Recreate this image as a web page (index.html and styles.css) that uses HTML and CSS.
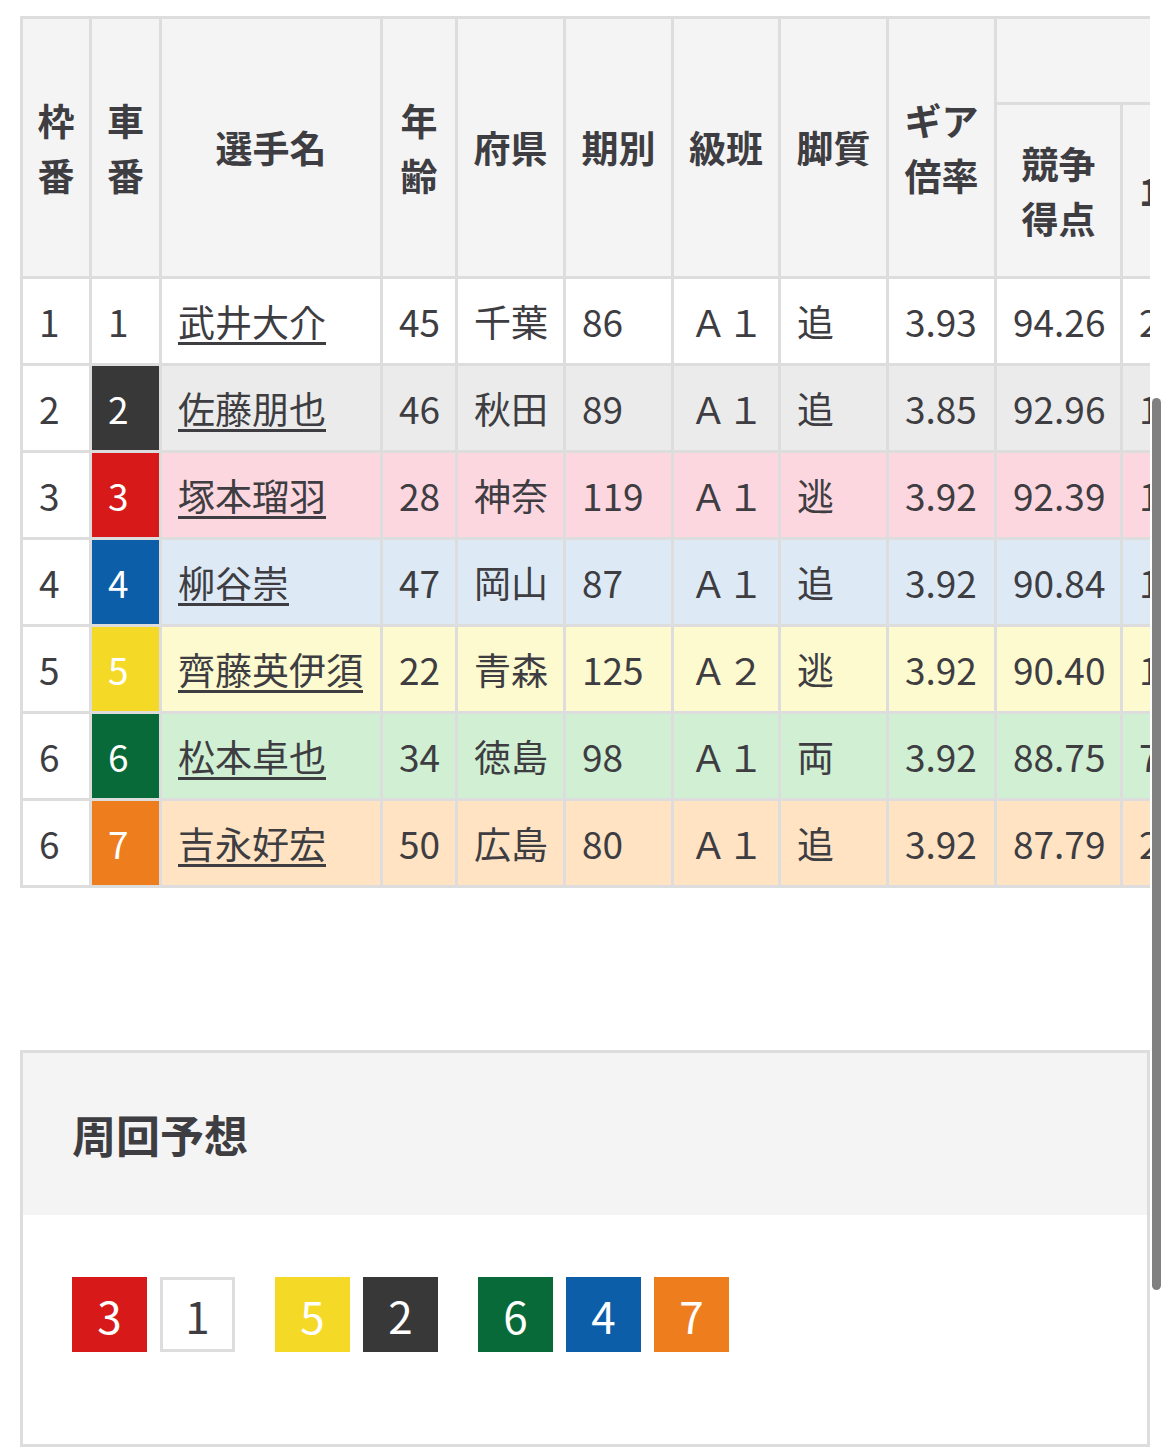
FILE: index.html
```html
<!DOCTYPE html>
<html lang="ja">
<head>
<meta charset="utf-8">
<title>出走表</title>
<link rel="stylesheet" href="styles.css">
</head>
<body>
<div class="table-wrap">
  <table class="entry">
    <colgroup>
      <col class="w-waku"><col class="w-car"><col class="w-name"><col class="w-age"><col class="w-std"><col class="w-std"><col class="w-class"><col class="w-std"><col class="w-std"><col class="w-score"><col class="w-n">
    </colgroup>
    <thead>
      <tr class="hr1">
        <th rowspan="2">枠<br>番</th>
        <th rowspan="2">車<br>番</th>
        <th rowspan="2">選手名</th>
        <th rowspan="2">年<br>齢</th>
        <th rowspan="2">府県</th>
        <th rowspan="2">期別</th>
        <th rowspan="2">級班</th>
        <th rowspan="2">脚質</th>
        <th rowspan="2">ギア<br>倍率</th>
        <th colspan="2" class="group"></th>
      </tr>
      <tr class="hr2">
        <th>競争<br>得点</th>
        <th class="n">1</th>
      </tr>
    </thead>
    <tbody>
      <tr class="r1">
        <td class="waku">1</td><td class="car">1</td><td><a href="#">武井大介</a></td><td>45</td><td>千葉</td><td>86</td><td>Ａ１</td><td>追</td><td>3.93</td><td>94.26</td><td>2</td>
      </tr>
      <tr class="r2">
        <td class="waku">2</td><td class="car">2</td><td><a href="#">佐藤朋也</a></td><td>46</td><td>秋田</td><td>89</td><td>Ａ１</td><td>追</td><td>3.85</td><td>92.96</td><td>1</td>
      </tr>
      <tr class="r3">
        <td class="waku">3</td><td class="car">3</td><td><a href="#">塚本瑠羽</a></td><td>28</td><td>神奈</td><td>119</td><td>Ａ１</td><td>逃</td><td>3.92</td><td>92.39</td><td>1</td>
      </tr>
      <tr class="r4">
        <td class="waku">4</td><td class="car">4</td><td><a href="#">柳谷崇</a></td><td>47</td><td>岡山</td><td>87</td><td>Ａ１</td><td>追</td><td>3.92</td><td>90.84</td><td>1</td>
      </tr>
      <tr class="r5">
        <td class="waku">5</td><td class="car">5</td><td><a href="#">齊藤英伊須</a></td><td>22</td><td>青森</td><td>125</td><td>Ａ２</td><td>逃</td><td>3.92</td><td>90.40</td><td>1</td>
      </tr>
      <tr class="r6">
        <td class="waku">6</td><td class="car">6</td><td><a href="#">松本卓也</a></td><td>34</td><td>徳島</td><td>98</td><td>Ａ１</td><td>両</td><td>3.92</td><td>88.75</td><td>7</td>
      </tr>
      <tr class="r7">
        <td class="waku">6</td><td class="car">7</td><td><a href="#">吉永好宏</a></td><td>50</td><td>広島</td><td>80</td><td>Ａ１</td><td>追</td><td>3.92</td><td>87.79</td><td>2</td>
      </tr>
    </tbody>
  </table>
</div>

<section class="lap">
  <h2 class="lap-head">周回予想</h2>
  <div class="lap-body">
    <div class="lap-group">
      <span class="tile t3">3</span>
      <span class="tile t1">1</span>
    </div>
    <div class="lap-group">
      <span class="tile t5">5</span>
      <span class="tile t2">2</span>
    </div>
    <div class="lap-group">
      <span class="tile t6">6</span>
      <span class="tile t4">4</span>
      <span class="tile t7">7</span>
    </div>
  </div>
</section>

<div class="scroll-thumb"></div>
</body>
</html>
```

FILE: styles.css
```css
html, body {
  margin: 0;
  background: #fff;
}

body {
  padding: 16px 20px 0;
  font-family: "Noto Sans CJK JP", "Noto Sans", sans-serif;
  color: #3d3d42;
  font-size: 37px;
}

.table-wrap {
  width: 1130px;
  overflow: hidden;
}

.entry {
  table-layout: fixed;
  border-collapse: separate;
  border-spacing: 0;
  width: 1190px;
  border-top: 3px solid #dddddd;
  border-left: 3px solid #dddddd;
}

.w-waku { width: 69px; }
.w-car { width: 70px; }
.w-name { width: 221px; }
.w-age { width: 75px; }
.w-std { width: 108px; }
.w-class { width: 107px; }
.w-score { width: 126px; }
.w-n { width: 87px; }

.entry th,
.entry td {
  border-right: 3px solid #dddddd;
  border-bottom: 3px solid #dddddd;
  padding: 0 16px;
  line-height: 1.46;
  white-space: nowrap;
  overflow: hidden;
}

.entry th {
  background: #f4f4f4;
  font-weight: 700;
  text-align: center;
  vertical-align: middle;
  padding: 0;
}

.entry th.n {
  text-align: left;
  padding-left: 16px;
}

.hr1 { height: 86px; }
.hr2 { height: 174px; }

.entry td {
  text-align: left;
  vertical-align: middle;
  font-weight: 400;
}

.entry tbody tr { height: 87px; }

.entry td a {
  color: #3d3d42;
  text-decoration: underline;
  text-decoration-thickness: 3px;
  text-underline-offset: 5px;
}

.entry td.waku { background: #ffffff; }

.r1 td { background: #ffffff; }
.r2 td { background: #ebebeb; }
.r3 td { background: #fdd7df; }
.r4 td { background: #ddeaf6; }
.r5 td { background: #fefad0; }
.r6 td { background: #d0efd3; }
.r7 td { background: #ffe3c3; }

.r1 td.car { background: #ffffff; color: #3d3d42; }
.r2 td.car { background: #383838; color: #ffffff; }
.r3 td.car { background: #d7191a; color: #ffffff; }
.r4 td.car { background: #0c5ea8; color: #ffffff; }
.r5 td.car { background: #f4da27; color: #ffffff; }
.r6 td.car { background: #076a38; color: #ffffff; }
.r7 td.car { background: #ee7d1e; color: #ffffff; }

.lap {
  margin-top: 162px;
  width: 1130px;
  box-sizing: border-box;
  border: 3px solid #dddddd;
}

.lap-head {
  margin: 0;
  height: 162px;
  display: flex;
  align-items: center;
  padding-left: 49px;
  background: #f4f4f4;
  font-size: 44px;
  font-weight: 700;
  line-height: 1;
  color: #3d3d42;
}

.lap-body {
  display: flex;
  gap: 40px;
  padding: 62px 0 92px 49px;
  background: #ffffff;
}

.lap-group {
  display: flex;
  gap: 13px;
}

.tile {
  width: 75px;
  height: 75px;
  box-sizing: border-box;
  display: flex;
  align-items: center;
  justify-content: center;
  font-size: 44px;
  line-height: 1;
  color: #ffffff;
}

.t1 { background: #ffffff; color: #3d3d42; border: 3px solid #dddddd; }
.t2 { background: #383838; }
.t3 { background: #d7191a; }
.t4 { background: #0c5ea8; }
.t5 { background: #f4da27; }
.t6 { background: #076a38; }
.t7 { background: #ee7d1e; }

.scroll-thumb {
  position: fixed;
  left: 1152px;
  top: 398px;
  width: 9px;
  height: 892px;
  border-radius: 5px;
  background: #808080;
}
```
